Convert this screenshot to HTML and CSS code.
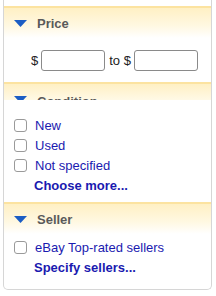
FILE: index.html
```html
<!DOCTYPE html>
<html lang="en">
<head>
  <meta charset="UTF-8">
  <meta name="viewport" content="width=device-width, initial-scale=1.0">
  <title>Refine results</title>
  <link rel="stylesheet" href="styles.css">
</head>
<body>
  <div class="panel">
    <div class="section">
      <div class="section-head">
        <svg class="arrow" width="13" height="7" viewBox="0 0 13 7"><path d="M0 0 H13 L6.5 7 Z" fill="#1b5dc4"/></svg>
        <span>Price</span>
      </div>
      <div class="price-row">
        <label for="min">$</label>
        <input type="text" id="min">
        <label for="max">to $</label>
        <input type="text" id="max">
      </div>
    </div>

    <div class="section">
      <div class="section-head clipped">
        <svg class="arrow" width="13" height="7" viewBox="0 0 13 7"><path d="M0 0 H13 L6.5 7 Z" fill="#1b5dc4"/></svg>
        <span>Condition</span>
      </div>
      <ul class="options cond">
        <li><span class="box"></span><a href="#">New</a></li>
        <li><span class="box"></span><a href="#">Used</a></li>
        <li><span class="box"></span><a href="#">Not specified</a></li>
        <li><a class="more" href="#">Choose more...</a></li>
      </ul>
    </div>

    <div class="section">
      <div class="section-head">
        <svg class="arrow" width="13" height="7" viewBox="0 0 13 7"><path d="M0 0 H13 L6.5 7 Z" fill="#1b5dc4"/></svg>
        <span>Seller</span>
      </div>
      <ul class="options seller">
        <li><span class="box"></span><a href="#">eBay Top-rated sellers</a></li>
        <li><a class="more" href="#">Specify sellers...</a></li>
      </ul>
    </div>
  </div>
</body>
</html>
```

FILE: styles.css
```css
body {
  margin: 0;
  background: #fff;
  font-family: "Liberation Sans", Arial, sans-serif;
  font-size: 13px;
}

.panel {
  margin: 0 4px 0 3px;
  padding-top: 6px;
  border: 1px solid #d6d6d6;
  border-top: none;
  border-radius: 0 0 5px 5px;
  height: 290px;
  box-sizing: border-box;
}

.section-head {
  height: 32px;
  display: flex;
  align-items: center;
  gap: 10px;
  padding-left: 10px;
  border-top: 2px solid #fce3a0;
  box-sizing: border-box;
  background: linear-gradient(#fff0c4, #fff8e2 60%, #fff);
  font-weight: bold;
  color: #5a5a5a;
}

.section-head.clipped {
  height: 18px;
  align-items: flex-start;
  padding-top: 10px;
  overflow: hidden;
  background: linear-gradient(#fff0c4, #fff9e6);
}

.section-head.clipped .arrow {
  margin-top: 2px;
}

.price-row {
  display: flex;
  align-items: center;
  padding: 12px 0 11px 27px;
  color: #222;
}

.price-row label {
  margin-right: 3px;
}

.price-row input {
  width: 64px;
  height: 21px;
  box-sizing: border-box;
  border: 1px solid #8a8a8a;
  border-radius: 3px;
  margin-right: 4px;
  padding: 0 3px;
}

.options {
  list-style: none;
  margin: 0;
  padding: 15px 0 7px 10px;
}

.options.seller {
  padding-top: 3px;
}

.options li {
  height: 20px;
  display: flex;
  align-items: center;
}

.box {
  width: 11px;
  height: 11px;
  border: 1px solid #9a9a9a;
  border-radius: 3px;
  margin-right: 8px;
  background: #fff;
}

.options a {
  color: #1a1ab0;
  text-decoration: none;
}

.options a.more {
  font-weight: bold;
  margin-left: 20px;
}
```
